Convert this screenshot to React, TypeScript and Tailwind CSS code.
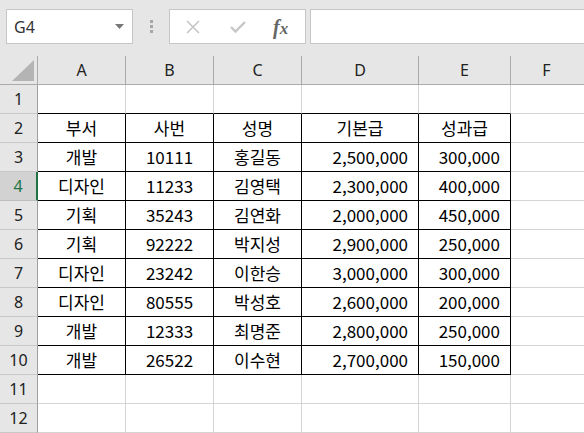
import React from 'react';

const cols = [
  { key: 'A', w: 'w-[88px]' },
  { key: 'B', w: 'w-[88px]' },
  { key: 'C', w: 'w-[88px]' },
  { key: 'D', w: 'w-[117px]' },
  { key: 'E', w: 'w-[92px]' },
];

type Row = [string, string, string, string, string];

const header: Row = ['부서', '사번', '성명', '기본급', '성과급'];

const data: Row[] = [
  ['개발', '10111', '홍길동', '2,500,000', '300,000'],
  ['디자인', '11233', '김영택', '2,300,000', '400,000'],
  ['기획', '35243', '김연화', '2,000,000', '450,000'],
  ['기획', '92222', '박지성', '2,900,000', '250,000'],
  ['디자인', '23242', '이한승', '3,000,000', '300,000'],
  ['디자인', '80555', '박성호', '2,600,000', '200,000'],
  ['개발', '12333', '최명준', '2,800,000', '250,000'],
  ['개발', '26522', '이수현', '2,700,000', '150,000'],
];

// rows 1..12; row 2 is the header of the table, 3..10 data
const rows: (Row | null)[] = [null, header, ...data, null, null];

const headFont = "font-['Noto_Sans','Open_Sans',sans-serif]";
const cellFont = "font-['Noto_Sans_CJK_KR','Noto_Sans',sans-serif]";

function FormulaBar() {
  return (
    <div className="flex h-[56px] items-start bg-[#e6e6e6] pt-[9px]">
      <div className="ml-[6px] flex h-[35px] w-[127px] items-center justify-between border border-[#c6c6c6] bg-white pl-[7px] pr-[8px]">
        <span className={`${headFont} text-[16px] text-[#333]`}>G4</span>
        <svg width="9" height="5" viewBox="0 0 9 5">
          <path d="M0 0h9L4.5 5z" fill="#777" />
        </svg>
      </div>
      <div className="ml-[17px] mt-[11px] flex flex-col gap-[2px]">
        <div className="h-[3px] w-[3px] bg-[#a6a6a6]" />
        <div className="h-[3px] w-[3px] bg-[#a6a6a6]" />
        <div className="h-[3px] w-[3px] bg-[#a6a6a6]" />
      </div>
      <div className="ml-[16px] flex h-[35px] w-[137px] items-center border border-[#c6c6c6] bg-white">
        <svg width="14" height="14" viewBox="0 0 14 14" className="ml-[16px]">
          <path d="M1 1l12 12M13 1L1 13" stroke="#c6c6c6" strokeWidth="1.6" fill="none" />
        </svg>
        <svg width="16" height="12" viewBox="0 0 16 12" className="ml-[30px]">
          <path d="M1 6l4.5 4.5L15 1" stroke="#c6c6c6" strokeWidth="2.4" fill="none" />
        </svg>
        <span className="ml-[27px] font-['Liberation_Serif',serif] text-[20px] font-bold italic leading-none text-[#666]">
          f<span className="text-[17px]">x</span>
        </span>
      </div>
      <div className="ml-[4px] h-[35px] flex-1 border border-r-0 border-[#c6c6c6] bg-white" />
    </div>
  );
}

export default function App() {
  return (
    <div className="h-[433px] w-[584px] overflow-hidden bg-white">
      <FormulaBar />
      {/* column headers */}
      <div className={`flex h-[29px] border-b border-[#ababab] bg-[#e6e6e6] ${headFont} text-[16px] text-[#222]`}>
        <div className="relative w-[38px] shrink-0 border-r border-[#ababab]">
          <svg width="22" height="21" viewBox="0 0 22 21" className="absolute bottom-[3px] right-[3px]">
            <path d="M22 0V21H0z" fill="#b4b4b4" />
          </svg>
        </div>
        {cols.map((c) => (
          <div key={c.key} className={`${c.w} flex shrink-0 items-center justify-center border-r border-[#ababab]`}>
            {c.key}
          </div>
        ))}
        <div className="flex flex-1 items-center justify-center pr-[2px]">F</div>
      </div>
      {rows.map((row, i) => {
        const n = i + 1;
        const selected = n === 4;
        const inTable = n >= 2 && n <= 10;
        const blackBottom = n >= 1 && n <= 10;
        return (
          <div key={n} className="flex h-[29px]">
            <div
              className={`flex w-[38px] shrink-0 items-center justify-center border-b ${headFont} text-[16px] ${
                selected
                  ? 'border-r-[2px] border-b-[#bdbdbd] border-r-[#217346] bg-[#d2d2d2] text-[#217346]'
                  : 'border-r border-b-[#c8c8c8] border-r-[#9e9e9e] bg-[#e6e6e6] text-[#222]'
              }`}
            >
              {n}
            </div>
            {cols.map((c, ci) => {
              const v = row ? row[ci] : '';
              const right = row && n > 2 && ci >= 3;
              return (
                <div
                  key={c.key}
                  className={`${c.w} flex shrink-0 items-center border-b border-r ${cellFont} text-[17px] text-black ${
                    blackBottom ? 'border-b-black' : 'border-b-[#d4d4d4]'
                  } ${inTable ? 'border-r-black' : 'border-r-[#d4d4d4]'} ${
                    right ? 'justify-end pr-[10px]' : 'justify-center'
                  }`}
                >
                  {v}
                </div>
              );
            })}
            <div className="flex-1 border-b border-[#d4d4d4]" />
          </div>
        );
      })}
    </div>
  );
}
